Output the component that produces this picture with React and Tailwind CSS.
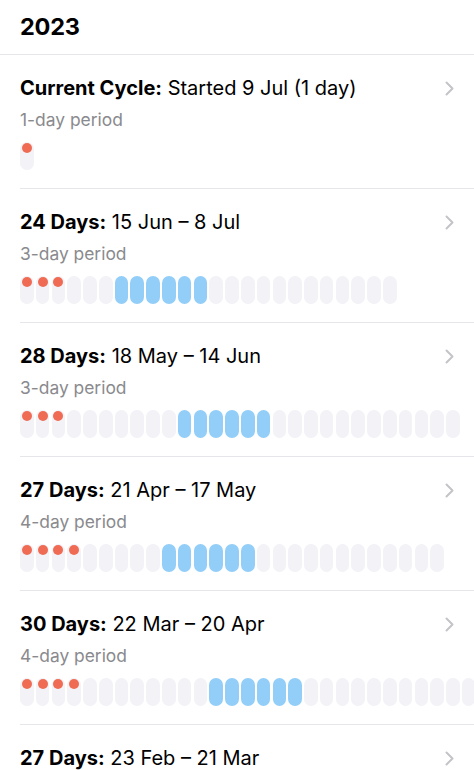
import React from "react";

const rows = [
  { bold: "Current Cycle:", rest: " Started 9 Jul (1 day)", sub: "1-day period", n: 1, red: 1, blueStart: -1, blue: 0 },
  { bold: "24 Days:", rest: " 15 Jun – 8 Jul", sub: "3-day period", n: 24, red: 3, blueStart: 6, blue: 6 },
  { bold: "28 Days:", rest: " 18 May – 14 Jun", sub: "3-day period", n: 28, red: 3, blueStart: 10, blue: 6 },
  { bold: "27 Days:", rest: " 21 Apr – 17 May", sub: "4-day period", n: 27, red: 4, blueStart: 9, blue: 6 },
  { bold: "30 Days:", rest: " 22 Mar – 20 Apr", sub: "4-day period", n: 30, red: 4, blueStart: 12, blue: 6 },
  { bold: "27 Days:", rest: " 23 Feb – 21 Mar", sub: "4-day period", n: 27, red: 4, blueStart: 10, blue: 6 },
];

function Chevron() {
  return (
    <svg width="9" height="15" viewBox="0 0 9 15" fill="none" className="shrink-0">
      <path d="M1.5 1.5 L7.5 7.5 L1.5 13.5" stroke="#c4c4c8" strokeWidth="2" strokeLinecap="round" strokeLinejoin="round" />
    </svg>
  );
}

function Pills({ row }) {
  const items = [];
  for (let i = 0; i < row.n; i++) {
    const isBlue = row.blueStart >= 0 && i >= row.blueStart && i < row.blueStart + row.blue;
    const isRed = i < row.red;
    items.push(
      <div
        key={i}
        className={
          "relative h-[28px] w-[13.6px] shrink-0 rounded-full " +
          (isBlue ? "bg-[#92cef8]" : "bg-[#f2f2f7]")
        }
      >
        {isRed && (
          <div className="absolute left-[1.8px] top-[1px] h-[10px] w-[10px] rounded-full bg-[#f06b54]" />
        )}
      </div>
    );
  }
  return <div className="mt-[10px] flex gap-[2.2px] overflow-hidden">{items}</div>;
}

export default function App() {
  return (
    <div
      className="h-[770px] w-[474px] overflow-hidden bg-white text-black"
      style={{ fontFamily: "Inter, 'Noto Sans', sans-serif" }}
    >
      <div className="flex h-[55px] items-center border-b border-[#e6e6ea] pl-5">
        <h1 className="text-[23.5px] font-bold tracking-[-0.2px]">2023</h1>
      </div>
      {rows.map((r, idx) => (
        <div key={idx} className="pl-5">
          <div className="border-b border-[#e6e6ea] pt-[19px] pb-[18px]">
            <div className="flex items-center justify-between pr-5">
              <div className="text-[20px] leading-[28px]">
                <span className="font-bold">{r.bold}</span>
                <span>{r.rest}</span>
              </div>
              <Chevron />
            </div>
            <div className="mt-[6px] text-[17.4px] leading-[24px] text-[#8a8a8e]">{r.sub}</div>
            <Pills row={r} />
          </div>
        </div>
      ))}
    </div>
  );
}
